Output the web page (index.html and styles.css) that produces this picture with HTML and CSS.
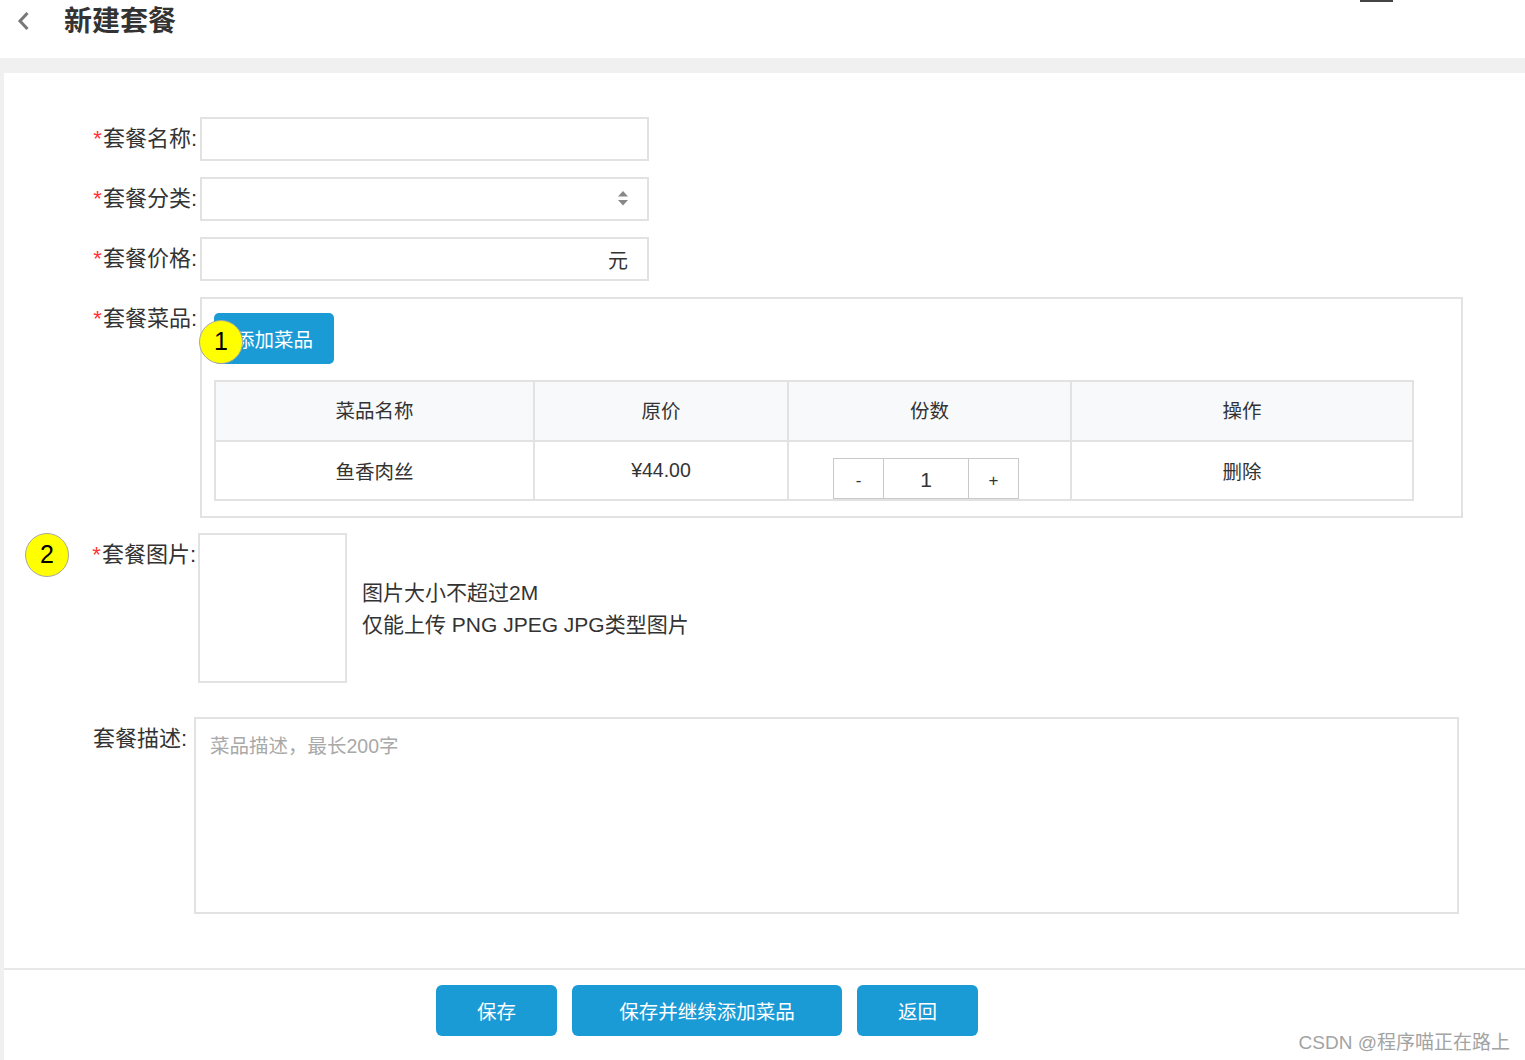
FILE: index.html
```html
<!DOCTYPE html>
<html lang="zh-CN">
<head>
<meta charset="utf-8">
<title>新建套餐</title>
<link rel="stylesheet" href="styles.css">
</head>
<body>
<header class="topbar">
  <span class="back">
    <svg width="14" height="20" viewBox="0 0 14 20"><polyline points="10.5,2 3,10 10.5,18" fill="none" stroke="#777" stroke-width="3" stroke-linejoin="miter"/></svg>
  </span>
  <h1 class="title">新建套餐</h1>
  <span class="top-mark"></span>
</header>

<main class="card">
  <form class="form">
    <div class="row">
      <label class="label"><span class="req">*</span>套餐名称:</label>
      <input class="field" type="text">
    </div>

    <div class="row">
      <label class="label"><span class="req">*</span>套餐分类:</label>
      <div class="select-wrap">
        <select class="field select"><option></option></select>
        <svg class="select-arrow" width="10" height="15" viewBox="0 0 10 15"><polygon points="5,0 10,5.5 0,5.5" fill="#888"/><polygon points="0,9 10,9 5,14.5" fill="#888"/></svg>
      </div>
    </div>

    <div class="row">
      <label class="label"><span class="req">*</span>套餐价格:</label>
      <div class="field field-suffix">
        <input class="bare" type="text">
        <span class="suffix">元</span>
      </div>
    </div>

    <div class="row row-dishes">
      <label class="label"><span class="req">*</span>套餐菜品:</label>
      <div class="dish-box">
        <button type="button" class="btn btn-add">添加菜品</button>
        <span class="marker marker-1">1</span>
        <table class="dish-table">
          <colgroup>
            <col class="c1"><col class="c2"><col class="c3"><col class="c4">
          </colgroup>
          <thead>
            <tr><th>菜品名称</th><th>原价</th><th>份数</th><th>操作</th></tr>
          </thead>
          <tbody>
            <tr>
              <td>鱼香肉丝</td>
              <td>¥44.00</td>
              <td class="count-cell">
                <div class="counter">
                  <span class="cnt-btn">-</span>
                  <span class="cnt-val">1</span>
                  <span class="cnt-btn">+</span>
                </div>
              </td>
              <td>删除</td>
            </tr>
          </tbody>
        </table>
      </div>
    </div>

    <div class="row row-image">
      <span class="marker marker-2">2</span>
      <label class="label"><span class="req">*</span>套餐图片:</label>
      <div class="upload-box"></div>
      <div class="upload-tips">
        <div>图片大小不超过2M</div>
        <div>仅能上传 PNG JPEG JPG类型图片</div>
      </div>
    </div>

    <div class="row row-desc">
      <label class="label">套餐描述:</label>
      <textarea class="textarea" placeholder="菜品描述，最长200字"></textarea>
    </div>
  </form>

  <div class="footer">
    <button type="button" class="btn btn-foot btn-short">保存</button>
    <button type="button" class="btn btn-foot btn-long">保存并继续添加菜品</button>
    <button type="button" class="btn btn-foot btn-short">返回</button>
  </div>

  <div class="watermark">CSDN @程序喵正在路上</div>
</main>
</body>
</html>
```

FILE: styles.css
```css
* {
  box-sizing: border-box;
}

html, body {
  margin: 0;
  padding: 0;
}

body {
  background: #f0f0f0;
  font-family: "Liberation Sans", "Noto Sans CJK SC", sans-serif;
  color: #333;
  width: 1525px;
  height: 1060px;
  overflow: hidden;
}

/* header */
.topbar {
  height: 58px;
  background: #fff;
  display: flex;
  align-items: flex-start;
}

.back {
  display: block;
  margin-left: 17px;
  margin-top: 11px;
  width: 14px;
  height: 20px;
}

.back svg {
  display: block;
}

.title {
  margin: 0 0 0 33px;
  font-size: 28px;
  line-height: 43px;
  font-weight: 700;
  color: #333;
}

.top-mark {
  margin-left: auto;
  margin-right: 132px;
  width: 33px;
  height: 2px;
  background: #444;
}

/* card */
.card {
  position: relative;
  margin: 15px 0 0 4px;
  background: #fff;
  min-height: calc(100vh - 73px);
}

.form {
  padding-top: 44px;
  margin: 0;
}

.row {
  position: relative;
  display: flex;
  align-items: flex-start;
  margin-bottom: 16px;
}

.label {
  flex-shrink: 0;
  width: 196px;
  padding-right: 3px;
  text-align: right;
  font-size: 22px;
  line-height: 43px;
  color: #333;
  white-space: nowrap;
}

.req {
  color: #f33;
  margin-right: 1px;
}

.field {
  display: block;
  width: 449px;
  height: 44px;
  border: 2px solid #e2e2e2;
  border-radius: 0;
  background: #fff;
  font-family: inherit;
  font-size: 20px;
  color: #333;
  padding: 0 12px;
  margin: 0;
  outline: none;
}

.select-wrap {
  position: relative;
}

.select {
  appearance: none;
  -webkit-appearance: none;
}

.select-arrow {
  position: absolute;
  right: 21px;
  top: 14px;
}

.field-suffix {
  display: flex;
  align-items: center;
  padding-right: 19px;
}

.bare {
  flex: 1;
  min-width: 0;
  border: none;
  outline: none;
  height: 100%;
  font-family: inherit;
  font-size: 20px;
  background: transparent;
  padding: 0;
}

.suffix {
  font-size: 20px;
  color: #333;
}

/* dishes */
.row-dishes {
  margin-bottom: 15px;
}

.dish-box {
  position: relative;
  width: 1263px;
  border: 2px solid #e2e2e2;
  padding: 14px 0 15px 12px;
}

.btn {
  border: none;
  background: #1a9bd6;
  color: #fff;
  font-family: inherit;
  font-size: 19.5px;
  cursor: pointer;
  padding: 0;
}

.btn-add {
  display: block;
  width: 120px;
  height: 51px;
  border-radius: 5px;
  margin-bottom: 16px;
}

.marker {
  position: absolute;
  width: 44px;
  height: 44px;
  border-radius: 50%;
  background: #ffff00;
  border: 1.5px solid #a8a8a0;
  color: #000;
  font-family: "Liberation Sans", sans-serif;
  font-size: 25px;
  line-height: 41px;
  text-align: center;
}

.marker-1 {
  left: -3px;
  top: 21px;
}

.marker-2 {
  left: 21px;
  top: 0;
}

.dish-table {
  width: 1198px;
  table-layout: fixed;
  border-collapse: collapse;
  border: 2px solid #e2e2e2;
  font-size: 19.5px;
  color: #333;
}

.c1 { width: 319px; }
.c2 { width: 254px; }
.c3 { width: 283px; }
.c4 { width: 342px; }

.dish-table th,
.dish-table td {
  border: 2px solid #e2e2e2;
  text-align: center;
  font-weight: 400;
  padding: 0;
}

.dish-table th {
  height: 60px;
  background: #f8f9fb;
  padding-bottom: 3px;
}

.dish-table td {
  height: 59px;
}

.dish-table td.count-cell {
  vertical-align: bottom;
  padding-right: 7px;
}

.counter {
  display: inline-flex;
  height: 41px;
  border: 1px solid #c9c9c9;
  vertical-align: bottom;
}

.cnt-btn,
.cnt-val {
  display: flex;
  align-items: center;
  justify-content: center;
  height: 100%;
}

.cnt-btn {
  width: 49px;
  font-size: 17px;
  padding-top: 4px;
}

.cnt-val {
  width: 86px;
  border-left: 1px solid #c9c9c9;
  border-right: 1px solid #c9c9c9;
  font-size: 21px;
  padding-top: 2px;
}

/* image */
.row-image {
  align-items: stretch;
  margin-bottom: 34px;
}

.row-image .label {
  width: 194px;
  padding-right: 2px;
}

.upload-box {
  width: 149px;
  height: 150px;
  border: 2px solid #e2e2e2;
}

.upload-tips {
  align-self: center;
  margin-left: 15px;
  font-size: 21px;
  line-height: 32px;
  color: #333;
  padding-top: 2px;
}

/* description */
.row-desc {
  margin-bottom: 0;
}

.row-desc .label {
  width: 190px;
  padding-right: 7px;
}

.textarea {
  display: block;
  width: 1265px;
  height: 197px;
  border: 2px solid #e2e2e2;
  padding: 13px 14px;
  font-family: inherit;
  font-size: 19.5px;
  line-height: 28px;
  color: #333;
  resize: none;
  outline: none;
  margin: 0;
}

.textarea::placeholder {
  color: #a9a9a9;
}

/* footer */
.footer {
  margin-top: 54px;
  border-top: 2px solid #e8e8e8;
  padding: 15px 0 0 432px;
  display: flex;
  gap: 15px;
}

.btn-foot {
  height: 51px;
  border-radius: 6px;
}

.btn-short {
  width: 121px;
}

.btn-long {
  width: 270px;
}

.watermark {
  position: absolute;
  right: 15px;
  bottom: 6px;
  font-size: 19px;
  color: #a3a3a3;
  white-space: nowrap;
}
```
